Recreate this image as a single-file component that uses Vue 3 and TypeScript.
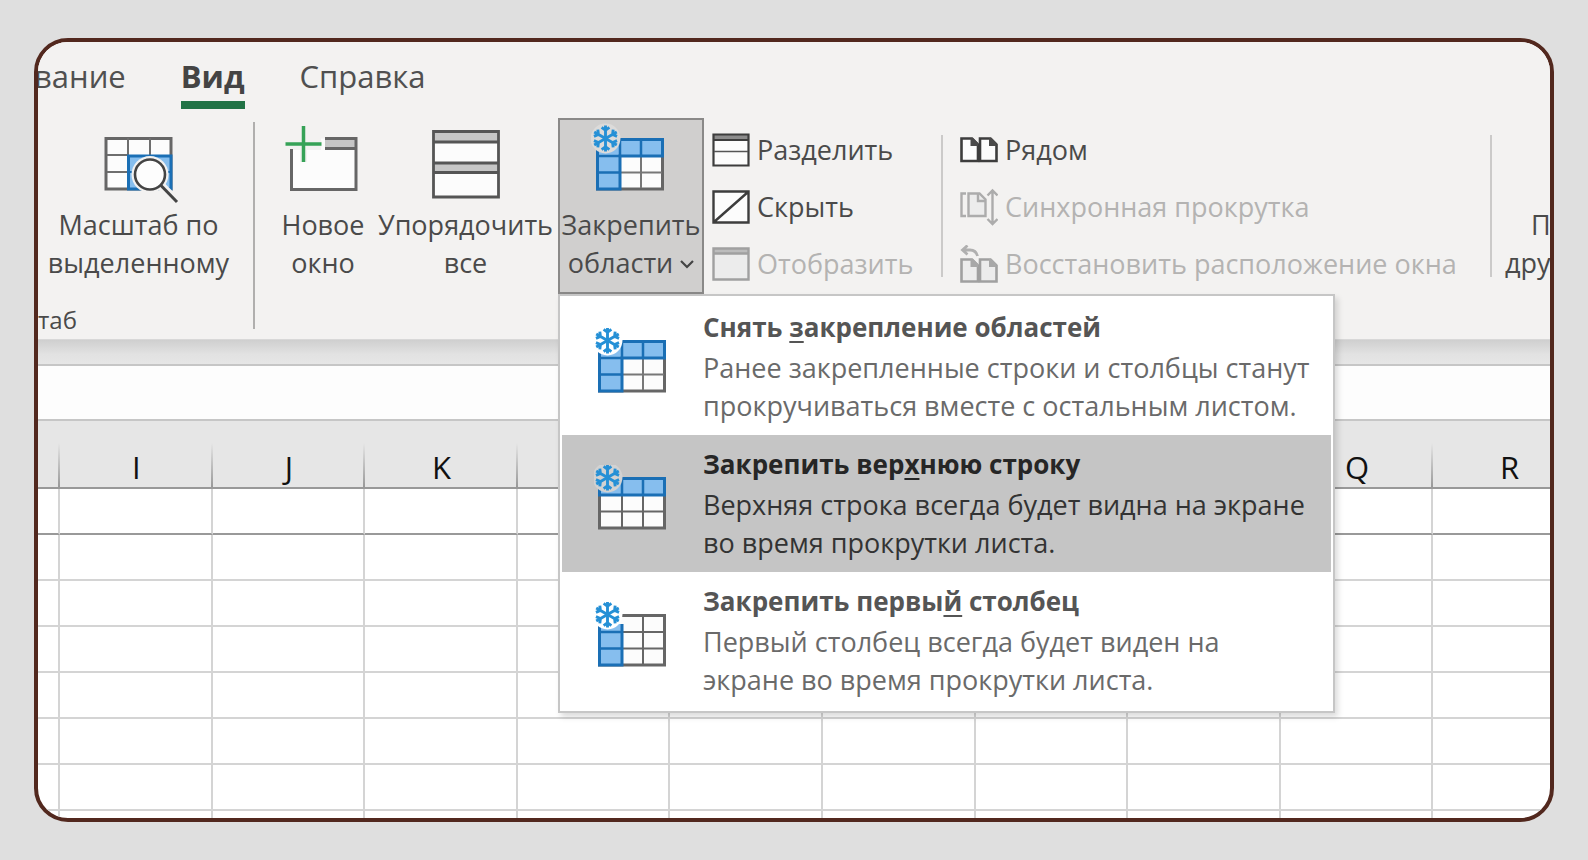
<script setup lang="ts">
interface MenuItem {
  icon: string
  before: string
  key: string
  after: string
  lines: string[]
  active?: boolean
}

interface SmallCommand {
  icon: string
  label: string
  disabled?: boolean
}

const windowCommands: SmallCommand[] = [
  { icon: 'split', label: 'Разделить' },
  { icon: 'hide', label: 'Скрыть' },
  { icon: 'unhide', label: 'Отобразить', disabled: true },
]

const compareCommands: SmallCommand[] = [
  { icon: 'side', label: 'Рядом' },
  { icon: 'sync', label: 'Синхронная прокрутка', disabled: true },
  { icon: 'reset', label: 'Восстановить расположение окна', disabled: true },
]

const menuItems: MenuItem[] = [
  {
    icon: 'freeze-both',
    before: 'Снять ',
    key: 'з',
    after: 'акрепление областей',
    lines: ['Ранее закрепленные строки и столбцы станут', 'прокручиваться вместе с остальным листом.'],
  },
  {
    icon: 'freeze-row',
    before: 'Закрепить вер',
    key: 'х',
    after: 'нюю строку',
    lines: ['Верхняя строка всегда будет видна на экране', 'во время прокрутки листа.'],
    active: true,
  },
  {
    icon: 'freeze-col',
    before: 'Закрепить первы',
    key: 'й',
    after: ' столбец',
    lines: ['Первый столбец всегда будет виден на', 'экране во время прокрутки листа.'],
  },
]

// Columns lying under the open menu carry no heading.
const columns = ['I', 'J', 'K', '', '', '', '', '', 'Q', 'R']
const rowCount = 8
</script>

<template>
  <svg class="sprite" aria-hidden="true">
    <defs>
      <symbol id="snow" viewBox="0 0 28 28" overflow="visible">
        <circle cx="14" cy="14" r="15.500" fill="var(--halo)" />
        <g fill="none" stroke="#2590d6" stroke-width="3">
          <g v-for="a in [0, 60, 120, 180, 240, 300]" :key="a" :transform="`rotate(${a} 14 14)`">
            <path d="M14 14V0.500M10 2.500L14 5.500L18 2.500" />
          </g>
        </g>
      </symbol>
      <symbol id="freeze-both" viewBox="0 0 72 66" overflow="visible">
        <path d="M5.500 13.500H70.500V63H5.500Z" fill="#fcfcfc" stroke="#666" stroke-width="3" />
        <path d="M28 46.500H70M49 30V62" stroke="#777" stroke-width="2" />
        <path d="M5.500 13.500H70.500V30H28V63H5.500Z" fill="#86beee" stroke="#1a6fb5" stroke-width="3" />
        <path d="M28 13V30M49 13V30M5 30H28M5 46.500H28" stroke="#1a6fb5" stroke-width="2.500" />
        <use href="#snow" x="0" y="-1" width="27" height="27" />
      </symbol>
      <symbol id="freeze-row" viewBox="0 0 72 66" overflow="visible">
        <path d="M5.500 13.500H70.500V63H5.500Z" fill="#fcfcfc" stroke="#666" stroke-width="3" />
        <path d="M5 46.500H70M28 30V62M49 30V62" stroke="#666" stroke-width="2" />
        <path d="M5.500 13.500H70.500V30H5.500Z" fill="#86beee" stroke="#1a6fb5" stroke-width="3" />
        <path d="M28 13V30M49 13V30" stroke="#1a6fb5" stroke-width="2.500" />
        <use href="#snow" x="0" y="-1" width="27" height="27" />
      </symbol>
      <symbol id="freeze-col" viewBox="0 0 72 66" overflow="visible">
        <path d="M5.500 13.500H70.500V63H5.500Z" fill="#fcfcfc" stroke="#666" stroke-width="3" />
        <path d="M28 30H70M28 46.500H70M49 14V62" stroke="#666" stroke-width="2" />
        <path d="M5.500 20V63H28V20Z" fill="#86beee" stroke="#1a6fb5" stroke-width="3" />
        <path d="M5 30H28M5 46.500H28" stroke="#1a6fb5" stroke-width="2.500" />
        <path d="M20 15H34V22H20Z" fill="#fcfcfc" />
        <path d="M22 13.500H40" stroke="#666" stroke-width="3" />
        <use href="#snow" x="0" y="-1" width="27" height="27" />
      </symbol>

      <symbol id="split" viewBox="0 0 38 38">
        <path d="M1.500 3.500H36.500V34.500H1.500Z" fill="#fcfcfc" />
        <path d="M1.500 3.500H36.500V9H1.500Z" fill="#8c8c8c" />
        <path d="M1.500 3.500H36.500V34.500H1.500ZM1 9H37" fill="none" stroke="#3d3d3d" stroke-width="2.200" />
        <path d="M2 20.500H36" stroke="#555" stroke-width="1.600" />
      </symbol>
      <symbol id="hide" viewBox="0 0 38 38">
        <path d="M1.500 3.500H36.500V34.500H1.500ZM2 34L36 4" fill="#fcfcfc" stroke="#3d3d3d" stroke-width="2.400" />
      </symbol>
      <symbol id="unhide" viewBox="0 0 38 38">
        <path d="M1.500 3.500H36.500V34.500H1.500Z" fill="#ececec" />
        <path d="M1.500 3.500H36.500V8.500H1.500Z" fill="#bcbcbc" />
        <path d="M1.500 3.500H36.500V34.500H1.500ZM1 8.500H37" fill="none" stroke="#a0a0a0" stroke-width="2.400" />
      </symbol>
      <symbol id="side" viewBox="0 0 38 38">
        <g fill="#fcfcfc" stroke="#3d3d3d" stroke-width="2.600">
          <path d="M1.500 7.500H12L18 13.500V30H1.500Z" />
          <path d="M20 7.500H30.500L36.500 13.500V30H20Z" />
        </g>
        <path d="M10.500 7V15H18V12L13 7ZM29 7V15H36.500V12L31.500 7Z" fill="#4a4a4a" />
      </symbol>
      <symbol id="sync" viewBox="0 0 38 38">
        <g fill="none" stroke="#acacac" stroke-width="2.400">
          <path d="M6 5.500H1.500V28H6" />
          <path d="M8.500 5.500H19.500L25.500 11.500V28H8.500Z" fill="#ececec" />
          <path d="M18 5V13H26" />
          <path d="M32.500 3V35M27.500 7.500L32.500 2.500L37.500 7.500M27.500 31L32.500 36L37.500 31" />
        </g>
      </symbol>
      <symbol id="reset" viewBox="0 0 38 38">
        <g fill="#ececec" stroke="#a0a0a0" stroke-width="2.600">
          <path d="M1.500 14.500H12L18 20.500V36.500H1.500Z" />
          <path d="M20 14.500H30.500L36.500 20.500V36.500H20Z" />
        </g>
        <path d="M10.500 14V22H18V19L13 14ZM29 14V22H36.500V19L31.500 14Z" fill="#a8a8a8" />
        <path d="M2 5H10Q16 5 17.500 11M7.500 0.500L2.500 5L7.500 9.500" fill="none" stroke="#b0b0b0" stroke-width="2.800" />
      </symbol>
    </defs>
  </svg>

  <main class="frame">
    <header class="ribbon">
      <nav class="tabs">
        <button class="tab" type="button">вание</button>
        <button class="tab current" type="button">Вид</button>
        <button class="tab" type="button">Справка</button>
      </nav>

      <div class="tools">
        <section class="zoom-group">
          <button class="tool zoom" type="button">
            <svg class="tool-icon" viewBox="0 0 80 86">
              <path d="M7 18.500H72V69H7Z" fill="#fcfcfc" stroke="#666" stroke-width="3" />
              <path d="M29 18V35M51 18V35M8 35H29M8 52H29" stroke="#6e6e6e" stroke-width="2" />
              <path d="M29.500 36H72V69H29.500Z" fill="#86beee" stroke="#1a6fb5" stroke-width="3" />
              <path d="M51 36V69M30 52H72" stroke="#1a6fb5" stroke-width="2" />
              <circle cx="51" cy="54.500" r="18.500" fill="#f3f2f1" />
              <path d="M58 62L76 80" stroke="#f3f2f1" stroke-width="9" />
              <circle cx="51" cy="54.500" r="15" fill="#fdfdfd" stroke="#444" stroke-width="2.600" />
              <path d="M62 65.500L78 82" stroke="#444" stroke-width="3" />
            </svg>
            <span class="label">Масштаб по<br />выделенному</span>
          </button>
          <span class="group-name">таб</span>
        </section>

        <span class="rule tall"></span>

        <section class="window-group">
          <button class="tool new-window" type="button">
            <svg class="tool-icon" viewBox="0 0 80 86">
              <path d="M8.500 30H38V18.500H73V69.500H8.500Z" fill="#fcfcfc" />
              <path d="M42 18.500H73V28.500H42Z" fill="#c6c6c6" />
              <path d="M42 18.500H73V69.500H8.500V29M42 28.500H73" fill="none" stroke="#666" stroke-width="3" />
              <path d="M20.500 6V42M2.500 24H38.500" stroke="#f3f2f1" stroke-width="7" />
              <path d="M20.500 6V42M2.500 24H38.500" stroke="#36a257" stroke-width="3.500" />
            </svg>
            <span class="label">Новое<br />окно</span>
          </button>
          <button class="tool arrange" type="button">
            <svg class="tool-icon" viewBox="1 0 80 86">
              <path d="M8.500 11.500H73.500V77H8.500Z" fill="#fcfcfc" />
              <path d="M8.500 11.500H73.500V22H8.500ZM8.500 43H73.500V52.500H8.500Z" fill="#c6c6c6" />
              <path d="M8.500 11.500H73.500V77H8.500ZM8 22H73M8 43H73M8 52.500H73" fill="none" stroke="#555" stroke-width="2.800" />
            </svg>
            <span class="label">Упорядочить<br />все</span>
          </button>
          <div class="dropdown">
            <button class="tool freeze" type="button" aria-haspopup="menu" aria-expanded="true">
              <svg class="tool-icon" viewBox="-1 -6 80 86">
                <use href="#freeze-both" width="72" height="66" />
              </svg>
              <span class="label">Закрепить<br />области
                <svg class="chevron" viewBox="0 0 14 10"><path d="M1 2L7 8L13 2" fill="none" stroke="#444" stroke-width="2.200" /></svg>
              </span>
            </button>

            <div class="menu" role="menu">
              <button
                v-for="item in menuItems"
                :key="item.icon"
                class="item"
                :class="{ active: item.active }"
                type="button"
                role="menuitem"
              >
                <svg class="item-icon" viewBox="0 0 72 66"><use :href="'#' + item.icon" width="72" height="66" /></svg>
                <span class="item-text">
                  <strong class="title">{{ item.before }}<u>{{ item.key }}</u>{{ item.after }}</strong>
                  <span v-for="line in item.lines" :key="line" class="line">{{ line }}</span>
                </span>
              </button>
            </div>
          </div>
        </section>

        <section class="small-list windows">
          <button v-for="c in windowCommands" :key="c.icon" class="small" type="button" :disabled="c.disabled">
            <svg class="small-icon" viewBox="0 0 38 38"><use :href="'#' + c.icon" width="38" height="38" /></svg>
            {{ c.label }}
          </button>
        </section>

        <span class="rule"></span>

        <section class="small-list compare">
          <button v-for="c in compareCommands" :key="c.icon" class="small" type="button" :disabled="c.disabled">
            <svg class="small-icon" viewBox="0 0 38 38"><use :href="'#' + c.icon" width="38" height="38" /></svg>
            {{ c.label }}
          </button>
        </section>

        <span class="rule"></span>

        <button class="tool switch" type="button">
          <span class="label"><span class="indent">П</span><br />дру</span>
        </button>
      </div>
    </header>

    <div class="shade"></div>
    <input class="formula" type="text" aria-label="Строка формул" />

    <div class="sheet">
      <table class="grid">
        <thead>
          <tr>
            <th class="edge"></th>
            <th v-for="(c, i) in columns" :key="i" scope="col">{{ c }}</th>
          </tr>
        </thead>
        <tbody>
          <tr v-for="r in rowCount" :key="r">
            <td></td>
            <td v-for="(c, i) in columns" :key="i"></td>
          </tr>
        </tbody>
      </table>
    </div>
  </main>
</template>

<style>
html {
  background: #dfdfdf;
}
</style>

<style scoped>
.sprite {
  position: absolute;
  width: 0;
  height: 0;
}

.frame {
  margin: 38px 34px;
  border: 4px solid #52281e;
  border-radius: 34px;
  overflow: hidden;
  background: #fff;
  color: #4a4a4a;
  font-family: "Open Sans", "Noto Sans", sans-serif;
  font-size: 27px;
}

button {
  margin: 0;
  padding: 0;
  border: 0;
  background: none;
  color: inherit;
  font: inherit;
}

.ribbon {
  background: #f3f2f1;
  border-bottom: 1px solid #d8d8d8;
}

.tabs {
  display: flex;
  gap: 55px;
  height: 76px;
  margin-left: -4px;
  padding-top: 14px;
  box-sizing: border-box;
}

.tab {
  align-self: flex-start;
  padding-bottom: 5px;
  border-bottom: 8px solid transparent;
  color: #505050;
  font-size: 31px;
  line-height: 40px;
}

.tab.current {
  border-color: #217346;
  color: #444;
  font-weight: 700;
}

.tools {
  display: flex;
  align-items: flex-start;
  height: 221px;
  white-space: nowrap;
}

.tools > * {
  flex: none;
}

.zoom-group {
  width: 215px;
}

.tool {
  display: flex;
  flex-direction: column;
  align-items: center;
  box-sizing: border-box;
  height: 176px;
  border: 2px solid transparent;
  --halo: #dcdbda;
}

.tool-icon {
  flex: none;
  width: 80px;
  height: 86px;
}

.label {
  line-height: 38px;
}

.zoom {
  width: 201px;
}

.group-name {
  display: block;
  margin-top: 7px;
  font-size: 24px;
  line-height: 38px;
}

.rule {
  width: 2px;
  height: 142px;
  margin-top: 17px;
  background: #cbcac9;
}

.rule.tall {
  height: 207px;
  margin-top: 4px;
  background: #b0afae;
}

.window-group {
  display: flex;
  padding-left: 18px;
}

.new-window {
  width: 100px;
}

.arrange {
  width: 185px;
}

.dropdown {
  position: relative;
}

.freeze {
  width: 146px;
  border-color: #8a8988;
  background: #d0cfce;
}

.chevron {
  width: 14px;
  height: 10px;
  margin-bottom: 4px;
}

.small-list {
  display: flex;
  flex-direction: column;
  padding-top: 3px;
}

.windows {
  width: 237px;
  box-sizing: border-box;
  padding-left: 8px;
}

.compare {
  width: 547px;
  box-sizing: border-box;
  padding-left: 17px;
}

.small {
  display: flex;
  align-items: center;
  gap: 7px;
  height: 57px;
}

.small:disabled {
  color: #b4b3b2;
}

.small-icon {
  width: 38px;
  height: 38px;
}

.switch {
  align-items: flex-start;
  padding: 86px 0 0 11px;
  text-align: left;
}

.indent {
  padding-left: 26px;
}

.menu {
  position: absolute;
  z-index: 2;
  top: 100%;
  left: 0;
  width: 777px;
  box-sizing: border-box;
  padding: 2px;
  border: 2px solid #c6c6c6;
  background: #fff;
  box-shadow: 3px 4px 6px rgba(0, 0, 0, 0.14);
}

.item {
  display: flex;
  width: 100%;
  height: 137px;
  padding: 7px 0 0 32px;
  gap: 37px;
  color: #6a6a6a;
  text-align: left;
  --halo: #fff;
}

.item.active {
  background: #c5c5c5;
  color: #333;
  --halo: #d2d2d2;
}

.item-icon {
  flex: none;
  width: 72px;
  height: 66px;
  margin-top: 23px;
}

.title {
  display: block;
  color: #555;
  font-size: 26px;
  font-weight: 700;
  line-height: 44px;
}

.active .title {
  color: #262626;
}

.title u {
  text-decoration-thickness: 2px;
  text-underline-offset: 4px;
}

.line {
  display: block;
  line-height: 38px;
}

.shade {
  height: 24px;
  background: linear-gradient(#cfcfcf, #e2e2e2 60%, #e6e6e6);
}

.formula {
  display: block;
  width: 100%;
  height: 57px;
  box-sizing: border-box;
  padding: 0 12px;
  border: solid #c6c6c6;
  border-width: 2px 0;
  border-radius: 0;
  background: #fdfdfd;
  font: inherit;
}

.sheet {
  height: 397px;
  overflow: hidden;
}

.grid {
  width: calc(100% + 36px);
  table-layout: fixed;
  border-collapse: separate;
  border-spacing: 0;
}

th {
  height: 68px;
  box-sizing: border-box;
  padding: 26px 0 0;
  border-bottom: 2px solid #999;
  background: linear-gradient(#e6e6e6, #999) right bottom / 2px 44px no-repeat #e6e6e6;
  color: #111;
  font-size: 31px;
  font-weight: 400;
  line-height: 40px;
}

.edge {
  width: 22px;
}

td {
  height: 46px;
  box-sizing: border-box;
  padding: 0;
  border: solid #d4d4d4;
  border-width: 0 2px 2px 0;
}

tbody tr:first-child td {
  border-bottom-color: #999;
}
</style>
